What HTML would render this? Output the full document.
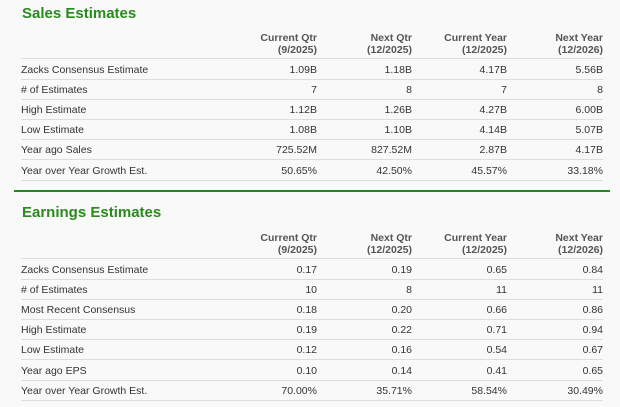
<!DOCTYPE html>
<html><head><meta charset="utf-8"><style>
html,body{margin:0;padding:0;width:620px;height:407px;background:#f9f9f9;overflow:hidden;font-family:"Liberation Sans",Arial,sans-serif;}
.t{position:absolute;left:22px;font-size:15px;font-weight:bold;color:#2a8a1e;}
.r{position:absolute;left:21px;width:582px;height:20px;border-bottom:1px solid #ddd;font-size:10.5px;color:#333;}
.r span{position:absolute;top:5px;white-space:nowrap}
.h{position:absolute;font-size:10.5px;font-weight:bold;color:#555;text-align:right;line-height:12px;}
.g{position:absolute;left:14px;width:596px;height:2px;background:#1e8a1e;top:190px}
</style></head><body>
<div class="t" style="top:5px">Sales Estimates</div>
<div class="g"></div>
<div class="t" style="top:204px">Earnings Estimates</div>
<script>
function hdr(top){var c=[["Current Qtr","(9/2025)",317],["Next Qtr","(12/2025)",412],["Current Year","(12/2025)",507],["Next Year","(12/2026)",603]];
c.forEach(function(x){document.write('<div class="h" style="top:'+top+'px;right:'+(620-x[2])+'px">'+x[0]+'<br>'+x[1]+'</div>')});}
function rows(start,data){data.forEach(function(d,i){var s='<div class="r" style="top:'+(start+i*20.1)+'px"><span style="left:0">'+d[0]+'</span>';
var rr=[317,412,507,603];for(var k=1;k<5;k++)s+='<span style="right:'+(603-rr[k-1])+'px">'+d[k]+'</span>';document.write(s+'</div>');});}
hdr(32);
document.write('<div class="r" style="top:38px;height:20px"></div>');
rows(59,[["Zacks Consensus Estimate","1.09B","1.18B","4.17B","5.56B"],["# of Estimates","7","8","7","8"],["High Estimate","1.12B","1.26B","4.27B","6.00B"],["Low Estimate","1.08B","1.10B","4.14B","5.07B"],["Year ago Sales","725.52M","827.52M","2.87B","4.17B"],["Year over Year Growth Est.","50.65%","42.50%","45.57%","33.18%"]]);
hdr(232);
document.write('<div class="r" style="top:238px;height:20px"></div>');
rows(259,[["Zacks Consensus Estimate","0.17","0.19","0.65","0.84"],["# of Estimates","10","8","11","11"],["Most Recent Consensus","0.18","0.20","0.66","0.86"],["High Estimate","0.19","0.22","0.71","0.94"],["Low Estimate","0.12","0.16","0.54","0.67"],["Year ago EPS","0.10","0.14","0.41","0.65"],["Year over Year Growth Est.","70.00%","35.71%","58.54%","30.49%"]]);
</script>
</body></html>
